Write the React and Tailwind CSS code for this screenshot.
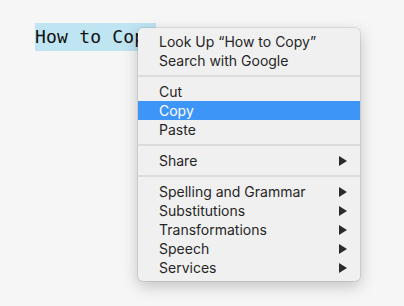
import React from 'react';

const Arrow = () => (
    <svg width="8" height="10" viewBox="0 0 8 10" className="shrink-0">
        <path d="M0 0 L8 5 L0 10 Z" fill="#2b2b2b" />
    </svg>
);

function Item({ label, active, submenu }) {
    return (
        <div
            className={`h-[19px] flex items-center justify-between pl-[21px] pr-[13px] text-[14px] leading-[19px] ${
                active ? 'bg-[#3d95f8] text-white' : 'text-[#262626]'
            }`}
        >
            <span>{label}</span>
            {submenu && <Arrow />}
        </div>
    );
}

const Separator = () => (
    <div className="h-[12px] flex items-center">
        <div className="w-full h-[2px] bg-[#dcdcdc]"></div>
    </div>
);

export default function App() {
    return (
        <div className="relative w-[404px] h-[306px] bg-[#f6f6f6] overflow-hidden">
            {/* Selected text */}
            <div className="pt-[23px] pl-[35px]">
                <span className="inline-block bg-[#bfe5f2] text-[#111] text-[18px] tracking-[0.2px] leading-[28px] font-['DejaVu_Sans_Mono',monospace]">
                    How to Copy
                </span>
            </div>

            {/* Context menu */}
            <div className="absolute left-[138px] top-[28px] w-[222px] py-[4px] bg-[#f0f0f0] rounded-[5px] shadow-[0_0_0_1px_rgba(0,0,0,0.08),0_5px_16px_rgba(0,0,0,0.22)] font-['Inter',sans-serif]">
                <Item label="Look Up “How to Copy”" />
                <Item label="Search with Google" />
                <Separator />
                <Item label="Cut" />
                <Item label="Copy" active />
                <Item label="Paste" />
                <Separator />
                <Item label="Share" submenu />
                <Separator />
                <Item label="Spelling and Grammar" submenu />
                <Item label="Substitutions" submenu />
                <Item label="Transformations" submenu />
                <Item label="Speech" submenu />
                <Item label="Services" submenu />
            </div>
        </div>
    );
}
